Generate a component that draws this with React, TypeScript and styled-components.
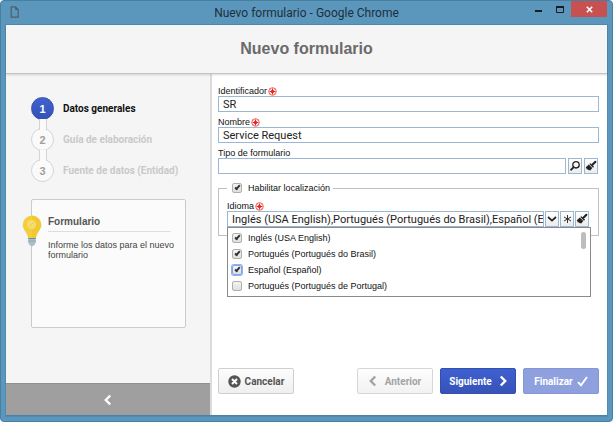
import React, { useState } from "react";
import styled, { createGlobalStyle, css } from "styled-components";

const GlobalStyle = createGlobalStyle`
  *, *::before, *::after { box-sizing: border-box; }
  html, body { margin: 0; padding: 0; background: #fff; }
  body { font-family: "Liberation Sans", Arial, sans-serif; }
  button, input { margin: 0; font-family: Roboto, "Liberation Sans", Arial, sans-serif; }
`;

const Frame = styled.div`
  min-height: 100vh;
  display: flex;
  flex-direction: column;
  padding: 0 5px 5px;
  background: #5b97bc;
  border: 1px solid #477fa1;
  border-radius: 4px;
`;

const TitleBar = styled.header`
  height: 24px;
  display: grid;
  grid-template-columns: 1fr auto 1fr;
  align-items: start;
`;

const DocIcon = styled.svg`
  margin: 5px 0 0 4px;
`;

const WindowTitle = styled.span`
  font: 12px/24px Roboto, "Open Sans", sans-serif;
  color: #1d2f3b;
  white-space: nowrap;
`;

const WindowControls = styled.div`
  display: flex;
  justify-content: flex-end;
`;

const WindowButton = styled.button<{ $close?: boolean }>`
  width: ${(p) => (p.$close ? 36 : 22)}px;
  height: 16px;
  padding: 0;
  border: 0;
  display: flex;
  align-items: center;
  justify-content: center;
  background: ${(p) => (p.$close ? "#c75050" : "transparent")};
  color: ${(p) => (p.$close ? "#fff" : "#1c1c1c")};
`;

const Page = styled.div`
  flex: 1;
  display: flex;
  flex-direction: column;
  background: #fff;
  border-bottom: 1px solid #4683a6;
  box-shadow: 0 0 0 1px #4f8bae;
`;

const PageHeader = styled.div`
  height: 49px;
  display: flex;
  align-items: center;
  justify-content: center;
  background: #f5f5f5;
  border-bottom: 1px solid #c4c4c4;
  box-shadow: 0 1px 2px rgba(0, 0, 0, 0.15);
  position: relative;
`;

const PageTitle = styled.h1`
  margin: 0;
  font-size: 16px;
  line-height: 20px;
  color: #6a6a6a;
`;

const Body = styled.div`
  flex: 1;
  display: grid;
  grid-template-columns: minmax(180px, 206px) 1fr;
`;

const Sidebar = styled.aside`
  display: flex;
  flex-direction: column;
  background: #f5f5f5;
  border-right: 2px solid #dcdcdc;
`;

const Steps = styled.ol`
  list-style: none;
  margin: 0;
  padding: 23px 0 0 25px;
  display: flex;
  flex-direction: column;
  gap: 8px;
`;

const Step = styled.li<{ $active?: boolean }>`
  display: flex;
  align-items: center;
  gap: 9px;
  font-family: Roboto, "Liberation Sans", sans-serif;
  font-size: 10px;
  font-weight: bold;
  color: ${(p) => (p.$active ? "#111" : "#c9c9c9")};
`;

const StepNumber = styled.span<{ $active?: boolean }>`
  position: relative;
  width: 23px;
  height: 23px;
  border-radius: 50%;
  display: flex;
  align-items: center;
  justify-content: center;
  font-family: "Liberation Sans", Arial, sans-serif;
  font-size: 11px;
  ${(p) =>
    p.$active
      ? css`
          color: #fff;
          background: linear-gradient(#3f62d0, #3452b6);
          border: 1px solid #3551ae;
        `
      : css`
          color: #a0a0a0;
          background: #fafafa;
          border: 1px solid #d4d4d4;
          &::before {
            content: "";
            position: absolute;
            bottom: 20px;
            width: 8px;
            height: 11px;
            background: #fafafa;
            border: solid #d4d4d4;
            border-width: 0 1px;
          }
        `}
`;

const TipCard = styled.section`
  position: relative;
  margin: 17px 24px 0 25px;
  min-height: 129px;
  padding: 16px 6px 16px 16px;
  background: #fbfbfb;
  border: 1px solid #cbcbcb;
  border-radius: 2px;
`;

const Bulb = styled.svg`
  position: absolute;
  left: -10px;
  top: 15px;
`;

const TipTitle = styled.h2`
  margin: 0 8px 8px 0;
  padding-bottom: 3px;
  border-bottom: 1px solid #dedede;
  font-size: 10px;
  line-height: 12px;
  color: #555;
`;

const TipText = styled.p`
  margin: 0;
  font-size: 9px;
  line-height: 10px;
  color: #444;
`;

const CollapseButton = styled.button`
  margin-top: auto;
  height: 32px;
  border: 0;
  border-top: 1px solid #8f8f8f;
  background: #9f9f9f;
  color: #fff;
  display: flex;
  align-items: center;
  justify-content: center;
`;

const Main = styled.main`
  display: flex;
  flex-direction: column;
  padding: 12px 8px 21px 6px;
  min-width: 0;
`;

const Form = styled.form`
  display: flex;
  flex-direction: column;
  gap: 5px;
`;

const Field = styled.div`
  display: flex;
  flex-direction: column;
`;

const Label = styled.label`
  display: flex;
  align-items: center;
  gap: 1px;
  font-size: 9px;
  line-height: 10px;
  color: #111;
`;

const ControlRow = styled.div`
  display: flex;
  gap: 1px;
`;

const LookupRow = styled(ControlRow)`
  gap: 2px;
  padding-right: 1px;
`;

const TextInput = styled.input`
  flex: 1;
  min-width: 0;
  height: 16px;
  padding: 0 0 0 4px;
  font-size: 11px;
  line-height: 14px;
  color: #222;
  background: #fff;
  border: 1px solid #9ab8d4;
  border-radius: 0;
  outline: 0;
`;

const IconButton = styled.button`
  width: 14px;
  height: 16px;
  padding: 0;
  display: flex;
  align-items: center;
  justify-content: center;
  color: #222;
  background: linear-gradient(#fff, #ececec);
  border: 1px solid #9ab8d4;
`;

const Fieldset = styled.fieldset`
  margin: 1px 0 0;
  padding: 5px 9px 8px 8px;
  min-width: 0;
  border: 1px solid #c0c0c0;
`;

const Legend = styled.legend`
  padding: 0 3px 0 5px;
`;

const CheckLabel = styled.label`
  display: flex;
  align-items: center;
  gap: 6px;
  height: 16px;
  font-size: 9px;
  color: #111;
`;

const Checkbox = styled.input.attrs({ type: "checkbox" })<{ $focused?: boolean }>`
  appearance: none;
  position: relative;
  width: 10px;
  height: 10px;
  border: 1px solid #b0b0b0;
  border-radius: 2px;
  background: linear-gradient(#f4f4f4, #dedede);
  ${(p) => p.$focused && "border-color: #7fa6e6; box-shadow: 0 0 0 1px #8fb2ec;"}
  &:checked::after {
    content: "";
    position: absolute;
    left: 3px;
    top: 0;
    width: 3px;
    height: 6px;
    border: solid #333;
    border-width: 0 2px 2px 0;
    transform: rotate(40deg);
  }
`;

const Combo = styled.div`
  position: relative;
`;

const Options = styled.div`
  position: absolute;
  z-index: 1;
  top: 100%;
  left: 0;
  right: -2px;
  padding: 2px 4px;
  display: flex;
  background: #fff;
  border: 1px solid #8a8a8a;
`;

const OptionList = styled.div`
  flex: 1;
  display: flex;
  flex-direction: column;
`;

const ScrollThumb = styled.div`
  width: 5px;
  height: 17px;
  margin-top: 2px;
  border-radius: 3px;
  background: #bdbdbd;
`;

const Actions = styled.div`
  margin-top: auto;
  display: flex;
  gap: 7px;
`;

const Spacer = styled.div`
  flex: 1;
`;

const variants = {
  light: css`
    color: #555;
    background: linear-gradient(#fdfdfd, #efefef);
    border-color: #cfcfcf;
  `,
  muted: css`
    color: #a3a3a3;
    background: linear-gradient(#fdfdfd, #f2f2f2);
    border-color: #d6d6d6;
  `,
  primary: css`
    color: #fff;
    background: linear-gradient(#3e60d0, #3853b8);
    border-color: #3450ae;
  `,
  faded: css`
    color: #fff;
    background: #8fa0df;
    border-color: #8496d4;
  `,
};

const ActionButton = styled.button<{ $variant: keyof typeof variants; $gap?: number }>`
  width: 76px;
  height: 26px;
  padding: 0;
  display: flex;
  align-items: center;
  justify-content: center;
  gap: ${(p) => p.$gap ?? 4}px;
  font-size: 10px;
  font-weight: bold;
  border: 1px solid;
  border-radius: 2px;
  ${(p) => variants[p.$variant]}
`;

function Required() {
  return (
    <svg width="9" height="9" viewBox="0 0 9 9" aria-label="obligatorio">
      <circle cx="4.5" cy="4.5" r="3.8" fill="#fff" stroke="#ee4a40" strokeWidth="0.9" />
      <path d="M4.5 1.5v6M1.5 4.5h6" stroke="#e5251b" strokeWidth="1" />
      <path d="M2.6 2.6l3.8 3.8M6.4 2.6L2.6 6.4" stroke="#e5251b" strokeWidth="0.8" />
    </svg>
  );
}

function BrushIcon() {
  return (
    <svg width="12" height="12" viewBox="0 0 12 12">
      <path d="M7.4 4.8L10.4 1.8" stroke="#222" strokeWidth="2" strokeLinecap="round" />
      <path d="M5.4 3.2l3.6 3.6-1 1-3.7-3.7z" fill="#222" />
      <path d="M3.8 4.6l3.5 3.5L5 10.8l-.9-1-.6.5-.8-1-.7.2-.7-1.2-.5-1z" fill="#222" />
    </svg>
  );
}

function Chevron({ dir }: { dir: "left" | "right" }) {
  return (
    <svg width="8" height="12" viewBox="0 0 8 12">
      <path
        d={dir === "left" ? "M6.2 1.5L1.8 6l4.4 4.5" : "M1.8 1.5L6.2 6l-4.4 4.5"}
        fill="none"
        stroke="currentColor"
        strokeWidth="2.4"
      />
    </svg>
  );
}

const LANGUAGES = [
  "Inglés (USA English)",
  "Portugués (Portugués do Brasil)",
  "Español (Español)",
  "Portugués (Portugués de Portugal)",
];

const STEPS = ["Datos generales", "Guía de elaboración", "Fuente de datos (Entidad)"];

export default function App() {
  const [id, setId] = useState("SR");
  const [name, setName] = useState("Service Request");
  const [type, setType] = useState("");
  const [localized, setLocalized] = useState(true);
  const [selected, setSelected] = useState([true, true, true, false]);
  const toggle = (i: number) => setSelected((s) => s.map((v, k) => (k === i ? !v : v)));

  return (
    <>
      <GlobalStyle />
      <Frame>
        <TitleBar>
          <DocIcon width="9" height="12" viewBox="0 0 9 12">
            <path d="M1.2 .8h4.3l2.7 2.9v7.5h-7z" fill="none" stroke="#4d5f6a" strokeWidth="1.2" />
            <path d="M5.2 .8v3.2h3z" fill="#4d5f6a" />
          </DocIcon>
          <WindowTitle>Nuevo formulario - Google Chrome</WindowTitle>
          <WindowControls>
            <WindowButton aria-label="Minimizar">
              <svg width="7" height="8" viewBox="0 0 7 8">
                <path d="M0 6h7" stroke="currentColor" strokeWidth="2" />
              </svg>
            </WindowButton>
            <WindowButton aria-label="Maximizar">
              <svg width="8" height="7" viewBox="0 0 8 7">
                <path d="M.5 1h7v5.5h-7z" fill="none" stroke="currentColor" />
                <path d="M0 1h8" stroke="currentColor" strokeWidth="2" />
              </svg>
            </WindowButton>
            <WindowButton $close aria-label="Cerrar">
              <svg width="7" height="7" viewBox="0 0 7 7">
                <path d="M.8 .8l5.4 5.4M6.2 .8L.8 6.2" stroke="currentColor" strokeWidth="1.6" />
              </svg>
            </WindowButton>
          </WindowControls>
        </TitleBar>
        <Page>
          <PageHeader>
            <PageTitle>Nuevo formulario</PageTitle>
          </PageHeader>
          <Body>
            <Sidebar>
              <Steps>
                {STEPS.map((text, i) => (
                  <Step key={text} $active={i === 0}>
                    <StepNumber $active={i === 0}>{i + 1}</StepNumber>
                    {text}
                  </Step>
                ))}
              </Steps>
              <TipCard>
                <Bulb width="20" height="32" viewBox="0 0 20 32">
                  <path d="M10 .5a9.3 9.3 0 0 0-9.3 9.3c0 5.4 4.8 7.6 5.3 13.2h8c.5-5.6 5.3-7.8 5.3-13.2A9.3 9.3 0 0 0 10 .5z" fill="#f3cf3b" />
                  <path d="M10 .5V23h4c.5-5.6 5.3-7.8 5.3-13.2A9.3 9.3 0 0 0 10 .5z" fill="#eec52f" opacity=".5" />
                  <circle cx="9.5" cy="9.5" r="4.5" fill="#f6dc70" />
                  <path d="M6.5 12.5l6-6" stroke="#f3cf3b" strokeWidth="1" />
                  <path d="M6.2 23h7.6v4.500l-1.300 2.500-2.500 1.500-2.500-1.500-1.300-2.500z" fill="#a9c0c6" />
                  <path d="M6.2 23.5h7.6" stroke="#72909a" />
                  <path d="M6.2 26h7.6" stroke="#8fa9b1" />
                </Bulb>
                <TipTitle>Formulario</TipTitle>
                <TipText>Informe los datos para el nuevo formulario</TipText>
              </TipCard>
              <CollapseButton aria-label="Contraer panel">
                <Chevron dir="left" />
              </CollapseButton>
            </Sidebar>
            <Main>
              <Form onSubmit={(e) => e.preventDefault()}>
                <Field>
                  <Label htmlFor="identificador">
                    Identificador <Required />
                  </Label>
                  <ControlRow>
                    <TextInput id="identificador" value={id} onChange={(e) => setId(e.target.value)} />
                  </ControlRow>
                </Field>
                <Field>
                  <Label htmlFor="nombre">
                    Nombre <Required />
                  </Label>
                  <ControlRow>
                    <TextInput id="nombre" value={name} onChange={(e) => setName(e.target.value)} />
                  </ControlRow>
                </Field>
                <Field>
                  <Label htmlFor="tipo">Tipo de formulario</Label>
                  <LookupRow>
                    <TextInput id="tipo" value={type} onChange={(e) => setType(e.target.value)} />
                    <IconButton type="button" aria-label="Buscar">
                      <svg width="12" height="12" viewBox="0 0 12 12">
                        <circle cx="7" cy="4.8" r="3.2" fill="none" stroke="#222" strokeWidth="1.3" />
                        <path d="M4.7 7.2L1.5 10.4" stroke="#222" strokeWidth="1.8" />
                      </svg>
                    </IconButton>
                    <IconButton type="button" aria-label="Limpiar">
                      <BrushIcon />
                    </IconButton>
                  </LookupRow>
                </Field>
                <Fieldset>
                  <Legend>
                    <CheckLabel>
                      <Checkbox checked={localized} onChange={() => setLocalized(!localized)} />
                      Habilitar localización
                    </CheckLabel>
                  </Legend>
                  <Label htmlFor="idioma">
                    Idioma <Required />
                  </Label>
                  <Combo>
                    <ControlRow>
                      <TextInput
                        id="idioma"
                        readOnly
                        value={LANGUAGES.filter((_, i) => selected[i]).join(",")}
                      />
                      <IconButton type="button" aria-label="Abrir lista">
                        <svg width="10" height="8" viewBox="0 0 10 8">
                          <path d="M1 2l4 3.6L9 2" fill="none" stroke="#222" strokeWidth="1.7" />
                        </svg>
                      </IconButton>
                      <IconButton type="button" aria-label="Seleccionar todo">
                        <svg width="9" height="10" viewBox="0 0 9 10">
                          <path d="M4.5 1v8M1 3l7 4M8 3L1 7" stroke="#333" strokeWidth="1" />
                        </svg>
                      </IconButton>
                      <IconButton type="button" aria-label="Limpiar idioma">
                        <BrushIcon />
                      </IconButton>
                    </ControlRow>
                    <Options>
                      <OptionList>
                        {LANGUAGES.map((lang, i) => (
                          <CheckLabel key={lang}>
                            <Checkbox checked={selected[i]} $focused={i === 2} onChange={() => toggle(i)} />
                            {lang}
                          </CheckLabel>
                        ))}
                      </OptionList>
                      <ScrollThumb />
                    </Options>
                  </Combo>
                </Fieldset>
              </Form>
              <Actions>
                <ActionButton $variant="light">
                  <svg width="13" height="13" viewBox="0 0 13 13">
                    <circle cx="6.5" cy="6.5" r="6.2" fill="#555" />
                    <path d="M4 4l5 5M9 4L4 9" stroke="#fff" strokeWidth="2" />
                  </svg>
                  Cancelar
                </ActionButton>
                <Spacer />
                <ActionButton $variant="muted" $gap={8} disabled>
                  <Chevron dir="left" />
                  Anterior
                </ActionButton>
                <ActionButton $variant="primary" $gap={7}>
                  Siguiente
                  <Chevron dir="right" />
                </ActionButton>
                <ActionButton $variant="faded" disabled>
                  Finalizar
                  <svg width="11" height="11" viewBox="0 0 11 11">
                    <path d="M1 6.2l3 3L10 1" fill="none" stroke="#fff" strokeWidth="1.9" />
                  </svg>
                </ActionButton>
              </Actions>
            </Main>
          </Body>
        </Page>
      </Frame>
    </>
  );
}
